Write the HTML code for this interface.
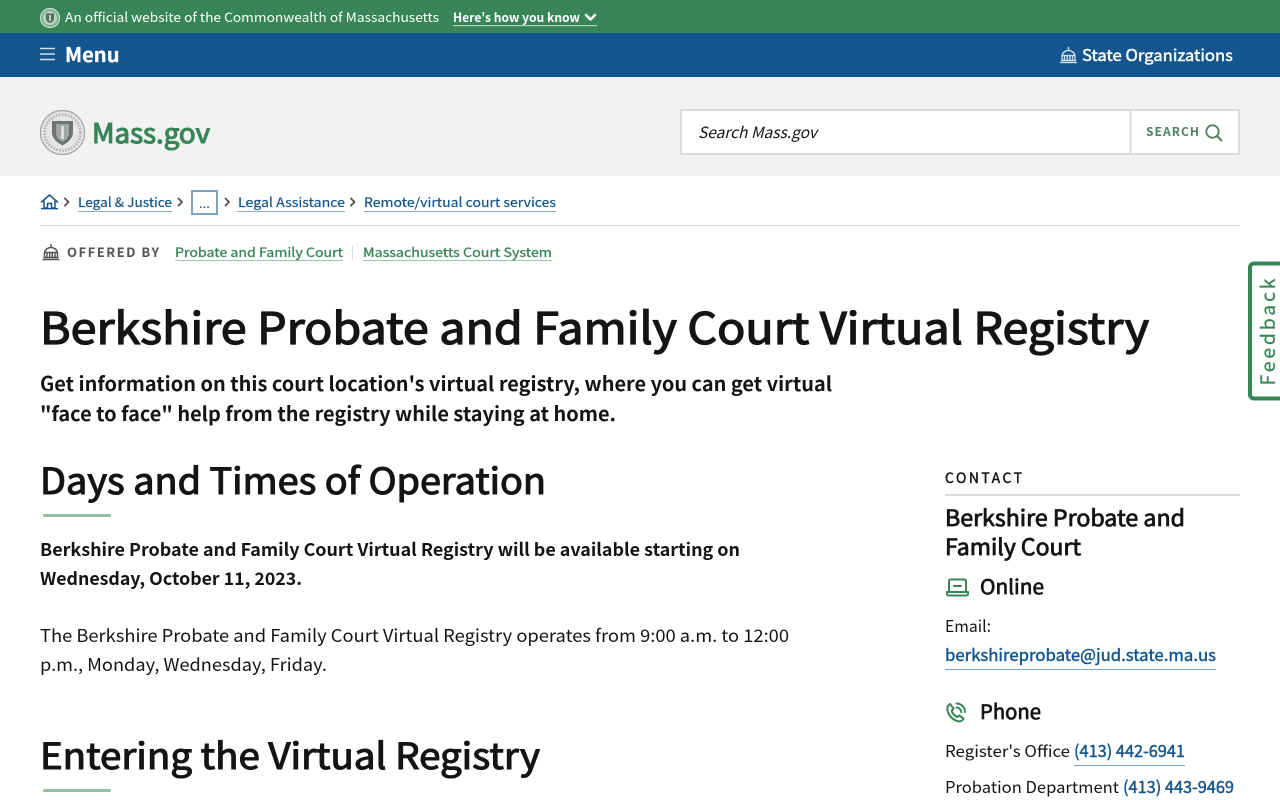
<!DOCTYPE html>
<html><head><meta charset="utf-8"><title>Berkshire Probate and Family Court Virtual Registry</title>
<style>
html,body{margin:0;padding:0;width:1280px;height:800px;overflow:hidden;background:#fff}
svg{display:block}
text{font-family:"Noto Sans CJK JP","Liberation Sans",sans-serif;white-space:pre}
.f{fill:none;stroke-linecap:round;stroke-linejoin:round}
.d{fill:#141414;stroke:#141414}
.b{fill:#14558f;stroke:#14558f}
.g{fill:#388557;stroke:#388557}
</style></head><body>
<svg width="1280" height="800" viewBox="0 0 1280 800" xmlns="http://www.w3.org/2000/svg">
<defs>
<g id="bld"><path d="M2 16.500h16M3 14.500h14M3.500 14V9.500h13V14M6 10v4M8.700 10v4M11.300 10v4M14 10v4M3.500 9.500C4 6.500 7 4.500 10 4.500s6 2 6.500 5M10 4.500V1.500" class="f" stroke-width="1.400"/></g>
</defs>
<rect width="1280" height="33" fill="#388557"/>
<rect y="33" width="1280" height="44" fill="#14558f"/>
<rect y="77" width="1280" height="99" fill="#f2f2f2"/>

<circle cx="50" cy="18" r="9.500" fill="#7fae92" stroke="#c6dccd" stroke-width="1.200"/>
<circle cx="50" cy="18" r="7" fill="#b9d2c2"/>
<path d="M46 13.500h8v5c0 2.500-2 3.500-4 4.500-2-1-4-2-4-4.500z" fill="#4f6f5c"/><path d="M50 15v6" stroke="#fff" stroke-width="1.300"/>
<text x="65" y="22" font-size="13" fill="#fff" textLength="374" lengthAdjust="spacingAndGlyphs">An official website of the Commonwealth of Massachusetts</text>
<text x="453" y="22" font-size="12.500" font-weight="700" fill="#fff" textLength="127" lengthAdjust="spacingAndGlyphs">Here's how you know</text>
<path d="M586 15l4.500 4.500 4.500-4.500" class="f" stroke="#fff" stroke-width="2.600"/>
<rect x="453" y="25" width="144" height="1.200" fill="#b5d1c0"/>

<path d="M40 48.500h15M40 54h15M40 59.500h15" stroke="#cfe0ee" stroke-width="1.500"/>
<text x="65" y="62" font-size="20" font-weight="700" fill="#fff" stroke="#fff" stroke-width=".3" textLength="54.500" lengthAdjust="spacingAndGlyphs">Menu</text>
<use href="#bld" x="1058.500" y="46" fill="none" stroke="#c5d9ea"/>
<text x="1082" y="61" font-size="16" fill="#fff" stroke="#fff" stroke-width=".45" textLength="151" lengthAdjust="spacingAndGlyphs">State Organizations</text>

<circle cx="62.500" cy="132.500" r="22" fill="#e6e6e4" stroke="#a3a3a0" stroke-width="1.200"/>
<circle cx="62.500" cy="132.500" r="18" fill="none" stroke="#b5b5b2" stroke-width="3" stroke-dasharray="1.500 1.500"/>
<path d="M52 121h21v11c0 7-5.500 10.500-10.500 13.500-5-3-10.500-6.500-10.500-13.500z" fill="#6f736f"/>
<path d="M56 124h13v9c0 4.500-3.500 7-6.500 9-3-2-6.500-4.500-6.500-9z" fill="#a2a7a3"/>
<path d="M62.500 126v13" stroke="#e9e9e7" stroke-width="2.500"/>
<text x="92" y="143" font-size="27" class="g" stroke-width="1.100" textLength="118" lengthAdjust="spacingAndGlyphs">Mass.gov</text>

<rect x="681" y="110" width="558" height="44" fill="#fff" stroke="#dcdcdc" stroke-width="2"/>
<rect x="1129.500" y="110" width="2" height="44" fill="#dcdcdc"/>
<text x="698" y="138" font-size="15.500" font-style="italic" fill="#141414" textLength="119" lengthAdjust="spacingAndGlyphs">Search Mass.gov</text>
<text x="1146" y="136" font-size="12" font-weight="700" fill="#4f7f63" textLength="53" lengthAdjust="spacing">SEARCH</text>
<circle cx="1212.500" cy="131.500" r="6.200" fill="none" stroke="#4f7f63" stroke-width="1.800"/><path d="M1217 136l4.500 4.500" stroke="#4f7f63" stroke-width="2" stroke-linecap="round"/>

<path d="M41.500 202L49.500 195l8 7M44 201v7h3.500v-4.500h4V208H55v-7" class="f" stroke="#14558f" stroke-width="1.500"/><path d="M41 208.700h17" stroke="#14558f" stroke-width="1.300"/>
<g class="f" stroke="#535353" stroke-width="1.900">
<path d="M65 198.500l3.500 3.500-3.500 3.500M178.500 198.500l3.500 3.500-3.500 3.500M225.500 198.500l3.500 3.500-3.500 3.500M351 198.500l3.500 3.500-3.500 3.500"/>
</g>
<g font-size="13" class="b" stroke-width=".2">
<text x="78" y="207" textLength="94" lengthAdjust="spacingAndGlyphs">Legal &amp; Justice</text>
<text x="238" y="207" textLength="107" lengthAdjust="spacingAndGlyphs">Legal Assistance</text>
<text x="364" y="207" textLength="192" lengthAdjust="spacingAndGlyphs">Remote/virtual court services</text>
</g>
<g fill="#8aaac7"><rect x="78" y="211" width="94" height="1"/><rect x="237" y="211" width="108" height="1"/><rect x="364" y="211" width="192" height="1"/></g>
<rect x="192" y="191" width="25" height="23" fill="#fff" stroke="#7fa3c4" stroke-width="2"/>
<text x="199" y="208" font-size="13" fill="#14558f">...</text>
<rect x="40" y="225" width="1200" height="1" fill="#dcdcdc"/>

<use href="#bld" x="41" y="243" fill="none" stroke="#535353"/>
<text x="67" y="257" font-size="13" font-weight="700" fill="#535353" textLength="92" lengthAdjust="spacing">OFFERED BY</text>
<g font-size="13" class="g" stroke-width=".3">
<text x="175" y="257" textLength="168" lengthAdjust="spacingAndGlyphs">Probate and Family Court</text>
<text x="363" y="257" textLength="189" lengthAdjust="spacingAndGlyphs">Massachusetts Court System</text>
</g>
<g fill="#9cc2aa"><rect x="175" y="260" width="168" height="1"/><rect x="363" y="260" width="189" height="1"/></g>
<rect x="352" y="246" width="1" height="14" fill="#dcdcdc"/>

<path d="M1282 263.500h-28a4 4 0 0 0-4 4v127a4 4 0 0 0 4 4h28" fill="#fff" stroke="#388557" stroke-width="4"/>
<text transform="translate(1275 385.500) rotate(-90)" font-size="19.500" class="g" stroke-width=".25" textLength="107" lengthAdjust="spacing">Feedback</text>

<text x="40" y="344" font-size="43.500" class="d" stroke-width="1.300" textLength="1109" lengthAdjust="spacingAndGlyphs">Berkshire Probate and Family Court Virtual Registry</text>
<text x="40" y="391" font-size="20" font-weight="700" fill="#141414" textLength="792" lengthAdjust="spacingAndGlyphs">Get information on this court location's virtual registry, where you can get virtual</text>
<text x="40" y="421" font-size="20" font-weight="700" fill="#141414" textLength="576" lengthAdjust="spacingAndGlyphs">"face to face" help from the registry while staying at home.</text>

<text x="40" y="494" font-size="36" class="d" stroke-width="1.100" textLength="506" lengthAdjust="spacingAndGlyphs">Days and Times of Operation</text>
<rect x="43" y="514" width="68" height="3" rx="1.500" fill="#8fbea1"/>
<text x="40" y="556" font-size="17.500" font-weight="700" fill="#141414" textLength="700" lengthAdjust="spacingAndGlyphs">Berkshire Probate and Family Court Virtual Registry will be available starting on</text>
<text x="40" y="585" font-size="17.500" font-weight="700" fill="#141414" textLength="262" lengthAdjust="spacingAndGlyphs">Wednesday, October 11, 2023.</text>
<text x="40" y="642" font-size="17.500" fill="#141414" textLength="749" lengthAdjust="spacingAndGlyphs">The Berkshire Probate and Family Court Virtual Registry operates from 9:00 a.m. to 12:00</text>
<text x="40" y="671" font-size="17.500" fill="#141414" textLength="287" lengthAdjust="spacingAndGlyphs">p.m., Monday, Wednesday, Friday.</text>
<text x="40" y="769" font-size="36" class="d" stroke-width="1.100" textLength="500" lengthAdjust="spacingAndGlyphs">Entering the Virtual Registry</text>
<rect x="43" y="789" width="68" height="3" rx="1.500" fill="#8fbea1"/>

<text x="945" y="483" font-size="14" class="d" stroke-width=".4" textLength="77" lengthAdjust="spacing">CONTACT</text>
<rect x="945" y="494" width="295" height="2" fill="#dcdcdc"/>
<text x="945" y="526" font-size="22.500" class="d" stroke-width=".8" textLength="240" lengthAdjust="spacingAndGlyphs">Berkshire Probate and</text>
<text x="945" y="555" font-size="22.500" class="d" stroke-width=".8" textLength="136" lengthAdjust="spacingAndGlyphs">Family Court</text>
<path d="M949 591v-10a1.500 1.500 0 0 1 1.500-1.500h14a1.500 1.500 0 0 1 1.500 1.500v10M947 592h21v2a1.500 1.500 0 0 1-1.500 1.500h-18a1.500 1.500 0 0 1-1.500-1.500zM954 586h7" class="f" stroke="#388557" stroke-width="2"/>
<text x="980" y="594" font-size="20" class="d" stroke-width=".7" textLength="64" lengthAdjust="spacingAndGlyphs">Online</text>
<text x="945" y="632" font-size="16" fill="#141414" textLength="46" lengthAdjust="spacingAndGlyphs">Email:</text>
<text x="945" y="661" font-size="16.500" class="b" stroke-width=".45" textLength="271" lengthAdjust="spacingAndGlyphs">berkshireprobate@jud.state.ma.us</text>
<rect x="945" y="669" width="271" height="1" fill="#7fa3c4"/>
<path d="M950 704c-2.500 1.500-3.300 4-2.300 7.500 1.500 4.500 5 8 9.300 9.500 2.500.8 5 .5 6.500-2.300l-3.800-3.200-2.500 1.500c-2.500-1-4.500-3.500-5.500-6l1.800-2.500zM956.500 707.500c2.500 0 4.800 2.300 4.800 4.800M956.500 703.500c5 0 8.500 4 8.500 8.500" class="f" stroke="#388557" stroke-width="2"/>
<text x="980" y="719" font-size="20" class="d" stroke-width=".7" textLength="61" lengthAdjust="spacingAndGlyphs">Phone</text>
<text x="945" y="757" font-size="16" fill="#141414" textLength="125" lengthAdjust="spacingAndGlyphs">Register's Office</text>
<text x="1074" y="757" font-size="16.500" class="b" stroke-width=".45" textLength="111" lengthAdjust="spacingAndGlyphs">(413) 442-6941</text>
<rect x="1074" y="765" width="111" height="1" fill="#7fa3c4"/>
<text x="945" y="793" font-size="16" fill="#141414" textLength="174" lengthAdjust="spacingAndGlyphs">Probation Department</text>
<text x="1123" y="793" font-size="16.500" class="b" stroke-width=".45" textLength="111" lengthAdjust="spacingAndGlyphs">(413) 443-9469</text>
</svg>
</body></html>
